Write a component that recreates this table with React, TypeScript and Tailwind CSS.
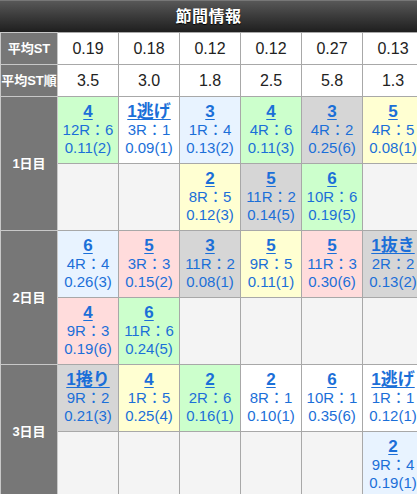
type Cell = { n: string; r: string; st: string; boat: number } | null;

const BG: Record<number, string> = {
  1: 'bg-white',
  2: 'bg-[#d6d6d6]',
  3: 'bg-[#ffdcdc]',
  4: 'bg-[#e8f3ff]',
  5: 'bg-[#ffffd2]',
  6: 'bg-[#ccffcc]',
};

const avgST = ['0.19', '0.18', '0.12', '0.12', '0.27', '0.13'];
const avgRank = ['3.5', '3.0', '1.8', '2.5', '5.8', '1.3'];

const c = (n: string, r: string, st: string, boat: number): Cell => ({ n, r, st, boat });

const days: { label: string; rows: Cell[][] }[] = [
  {
    label: '1日目',
    rows: [
      [c('4', '12R：6', '0.11(2)', 6), c('1逃げ', '3R：1', '0.09(1)', 1), c('3', '1R：4', '0.13(2)', 4), c('4', '4R：6', '0.11(3)', 6), c('3', '4R：2', '0.25(6)', 2), c('5', '4R：5', '0.08(1)', 5)],
      [null, null, c('2', '8R：5', '0.12(3)', 5), c('5', '11R：2', '0.14(5)', 2), c('6', '10R：6', '0.19(5)', 6), null],
    ],
  },
  {
    label: '2日目',
    rows: [
      [c('6', '4R：4', '0.26(3)', 4), c('5', '3R：3', '0.15(2)', 3), c('3', '11R：2', '0.08(1)', 2), c('5', '9R：5', '0.11(1)', 5), c('5', '11R：3', '0.30(6)', 3), c('1抜き', '2R：2', '0.13(2)', 2)],
      [c('4', '9R：3', '0.19(6)', 3), c('6', '11R：6', '0.24(5)', 6), null, null, null, null],
    ],
  },
  {
    label: '3日目',
    rows: [
      [c('1捲り', '9R：2', '0.21(3)', 2), c('4', '1R：5', '0.25(4)', 5), c('2', '2R：6', '0.16(1)', 6), c('2', '8R：1', '0.10(1)', 1), c('6', '10R：1', '0.35(6)', 1), c('1逃げ', '1R：1', '0.12(1)', 1)],
      [null, null, null, null, null, c('2', '9R：4', '0.19(1)', 4)],
    ],
  },
];

const labelCls =
  'bg-[#777777] text-white font-bold text-[13px] text-center border border-[#c8c8c8] p-0 whitespace-nowrap';

function DataCell({ cell }: { cell: Cell }) {
  if (!cell) return <td className="bg-[#f4f4f4] border border-[#a8a8a8] h-[67px]" />;
  return (
    <td className={`${BG[cell.boat]} border border-[#a8a8a8] h-[67px] text-center align-top pt-[5px] text-[#1b6fd8]`}>
      <div className="text-[17px] font-bold leading-[19px] underline underline-offset-[2px]">{cell.n}</div>
      <div className="text-[15px] leading-[18px] whitespace-nowrap">{cell.r}</div>
      <div className="text-[15px] leading-[18px] whitespace-nowrap">{cell.st}</div>
    </td>
  );
}

export default function App() {
  return (
    <div className="w-[417px] h-[494px] overflow-hidden bg-white font-['Liberation_Sans','Noto_Sans_CJK_JP',sans-serif]">
      <div className="h-[32px] flex items-center justify-center bg-gradient-to-b from-[#585858] to-[#1f1f1f] border-t border-[#777]">
        <span className="text-white font-bold text-[16px] tracking-[0.5px] [text-shadow:0_1px_1px_#000]">節間情報</span>
      </div>
      <table className="table-fixed border-collapse w-[423px]">
        <colgroup>
          <col className="w-[57px]" />
          {avgST.map((_, i) => (
            <col key={i} className="w-[61px]" />
          ))}
        </colgroup>
        <tbody>
          <tr className="h-[32px]">
            <th className={labelCls}>平均ST</th>
            {avgST.map((v, i) => (
              <td key={i} className="border border-[#a8a8a8] text-center text-[16px] text-[#222]">
                {v}
              </td>
            ))}
          </tr>
          <tr className="h-[32px]">
            <th className={labelCls}>平均ST順</th>
            {avgRank.map((v, i) => (
              <td key={i} className="border border-[#a8a8a8] text-center text-[16px] text-[#222]">
                {v}
              </td>
            ))}
          </tr>
          {days.map((d) =>
            d.rows.map((row, ri) => (
              <tr key={d.label + ri}>
                {ri === 0 && (
                  <th rowSpan={2} className={labelCls}>
                    {d.label}
                  </th>
                )}
                {row.map((cell, ci) => (
                  <DataCell key={ci} cell={cell} />
                ))}
              </tr>
            ))
          )}
        </tbody>
      </table>
    </div>
  );
}
